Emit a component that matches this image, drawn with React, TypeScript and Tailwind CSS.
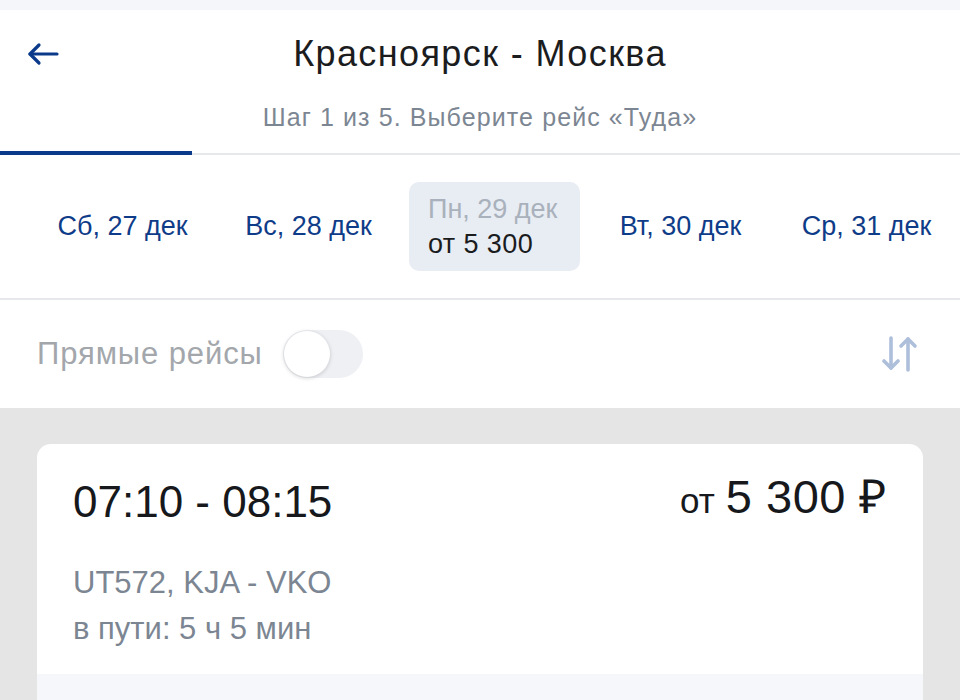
import { useState } from 'react';

const dates = [
  { label: 'Пт, 26 дек' },
  { label: 'Сб, 27 дек' },
  { label: 'Вс, 28 дек' },
  { label: 'Пн, 29 дек', price: 'от 5 300', active: true },
  { label: 'Вт, 30 дек' },
  { label: 'Ср, 31 дек' },
];

const BackArrow = () => (
  <svg width="34" height="24" viewBox="0 0 34 24" fill="none" stroke="#0b3a8a" strokeWidth="3.2" strokeLinecap="round" strokeLinejoin="round">
    <path d="M31 12H4" />
    <path d="M13 3L4 12l9 9" />
  </svg>
);

const SortIcon = () => (
  <svg width="36" height="38" viewBox="0 0 36 38" fill="none" stroke="#aebfdb" strokeWidth="3.6" strokeLinecap="round" strokeLinejoin="round">
    <path d="M9 3v30" />
    <path d="M2 26l7 7 7-7" />
    <path d="M26 35V4" />
    <path d="M19 11l7-7 7 7" />
  </svg>
);

export default function App() {
  const [direct, setDirect] = useState(false);

  return (
    <div className="w-[960px] h-[700px] overflow-hidden bg-[#e5e5e5] font-['Liberation_Sans',Arial,sans-serif]">
      <div className="h-[10px] bg-[#f4f6f9]" />

      <header className="bg-white">
        <div className="relative h-[88px] flex items-center justify-center">
          <button className="absolute left-[26px] top-[32px]">
            <BackArrow />
          </button>
          <h1 className="text-[36px] tracking-[1.4px] text-[#1b1c1e]">Красноярск - Москва</h1>
        </div>
        <p className="text-center text-[25px] tracking-[1.1px] text-[#7c8692] leading-[40px] -mt-[1px]">
          Шаг 1 из 5. Выберите рейс «Туда»
        </p>
        <div className="mt-[14px] h-[4px] flex">
          <div className="w-[192px] bg-[#0b3a8a]" />
          <div className="flex-1 flex flex-col justify-end">
            <div className="h-[2px] bg-[#e6e8eb]" />
          </div>
        </div>

        <div className="overflow-hidden h-[145px] border-b-2 border-[#e6e8eb]">
          <div className="flex gap-[15px] ml-[-149px] pt-[27px]">
            {dates.map((d) =>
              d.active ? (
                <div
                  key={d.label}
                  className="w-[171px] h-[89px] shrink-0 rounded-[10px] bg-[#e8ecf3] flex flex-col items-start justify-center pl-[19px] text-[27px] leading-[35px]"
                >
                  <span className="text-[#a9b1bc]">{d.label}</span>
                  <span className="text-[#1b1c1e] tracking-[0.4px]">{d.price}</span>
                </div>
              ) : (
                <div
                  key={d.label}
                  className="w-[171px] h-[89px] shrink-0 flex items-center justify-center text-[27px] text-[#0f3c88]"
                >
                  {d.label}
                </div>
              )
            )}
          </div>
        </div>

        <div className="h-[108px] flex items-center justify-between pl-[37px] pr-[42px]">
          <div className="flex items-center gap-[20px]">
            <span className="text-[31px] tracking-[0.9px] text-[#a3a7ac]">Прямые рейсы</span>
            <button
              onClick={() => setDirect(!direct)}
              className={`w-[80px] h-[48px] rounded-full p-[1px] flex items-center ${direct ? 'bg-[#0b3a8a] justify-end' : 'bg-[#eef0f4] justify-start'}`}
            >
              <span className="w-[46px] h-[46px] rounded-full bg-white shadow-[0_1px_4px_rgba(0,0,0,0.18)]" />
            </button>
          </div>
          <SortIcon />
        </div>
      </header>

      <main className="px-[37px] pt-[36px]">
        <div className="bg-white rounded-[14px] overflow-hidden">
          <div className="px-[36px] pt-[30px] pb-[22px]">
            <div className="flex items-start justify-between">
              <div className="text-[44px] leading-[56px] text-[#16181b]">07:10 - 08:15</div>
              <div className="flex items-baseline gap-[11px] text-[#16181b] leading-[46px]">
                <span className="text-[35px]">от</span>
                <span className="text-[47px] tracking-[0.5px]">5 300 ₽</span>
              </div>
            </div>
            <div className="mt-[30px] text-[31px] leading-[46px] text-[#7c8692]">
              <div>UT572, KJA - VKO</div>
              <div>в пути: 5 ч 5 мин</div>
            </div>
          </div>
          <div className="h-[60px] bg-[#f5f7fa]" />
        </div>
      </main>
    </div>
  );
}
